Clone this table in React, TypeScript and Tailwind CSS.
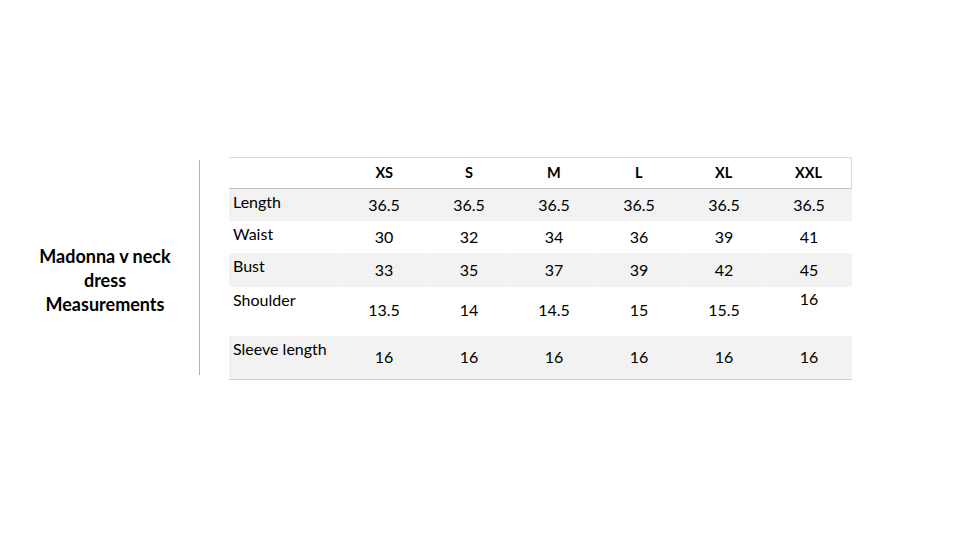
const sizes = ['XS', 'S', 'M', 'L', 'XL', 'XXL'];

type Row = {
  label: string;
  values: string[];
  height: string;
  shaded: boolean;
  topLast?: boolean;
};

const rows: Row[] = [
  { label: 'Length', values: ['36.5', '36.5', '36.5', '36.5', '36.5', '36.5'], height: 'h-[32px]', shaded: true },
  { label: 'Waist', values: ['30', '32', '34', '36', '39', '41'], height: 'h-[32px]', shaded: false },
  { label: 'Bust', values: ['33', '35', '37', '39', '42', '45'], height: 'h-[34px]', shaded: true },
  { label: 'Shoulder', values: ['13.5', '14', '14.5', '15', '15.5', '16'], height: 'h-[49px]', shaded: false, topLast: true },
  { label: 'Sleeve length', values: ['16', '16', '16', '16', '16', '16'], height: 'h-[44px]', shaded: true },
];

export default function App() {
  return (
    <div className="w-[960px] h-[540px] bg-white flex items-start pt-[157px] text-black font-['Lato','Liberation_Sans',sans-serif]">
      <div className="w-[170px] ml-[20px] mt-[87px] text-center font-bold text-[18px] leading-[24px]">
        Madonna v neck
        <br />
        dress
        <br />
        Measurements
      </div>

      <div className="ml-[9px] mt-[3px] w-px h-[215px] bg-[#e29d98]" />

      <div className="ml-[29px] w-[623px]">
        <div className="flex h-[32px] border-t border-r border-[#d9d9d9] border-b border-b-[#bfbfbf]">
          <div className="w-[113px]" />
          {sizes.map((s) => (
            <div key={s} className="w-[85px] flex items-center justify-center font-bold text-[14.5px]">
              {s}
            </div>
          ))}
        </div>

        {rows.map((r, i) => (
          <div
            key={r.label}
            className={`flex ${r.height} ${r.shaded ? 'bg-[#f2f2f2]' : 'bg-white'} ${i === rows.length - 1 ? 'border-b border-[#cfcfcf]' : ''}`}
          >
            <div className="w-[113px] pl-[4px] pt-[3px] text-[16px] leading-5 border-r border-white/30">{r.label}</div>
            {r.values.map((v, j) => (
              <div
                key={j}
                className={`w-[85px] flex justify-center text-[16px] leading-5 border-r border-white/30 ${
                  r.topLast && j === 5 ? 'items-start pt-[2px]' : r.topLast ? 'items-center pb-[3px]' : 'items-center pb-px'
                }`}
              >
                {v}
              </div>
            ))}
          </div>
        ))}
      </div>
    </div>
  );
}
